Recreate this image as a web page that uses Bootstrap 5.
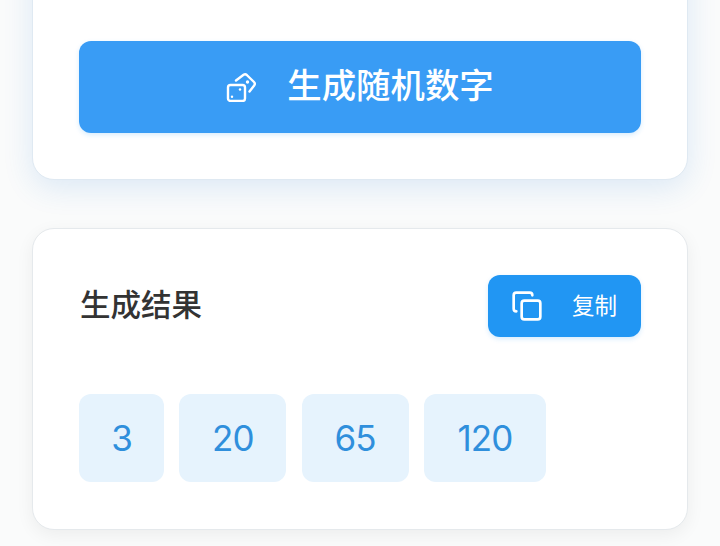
<!DOCTYPE html>
<html lang="zh">
<head>
<meta charset="utf-8">
<title>生成随机数字</title>
<link href="https://cdn.jsdelivr.net/npm/bootstrap@5.3.0/dist/css/bootstrap.min.css" rel="stylesheet">
<style>
html,body{height:546px;overflow:hidden}
body{background:#fafbfb;font-family:"Inter","Noto Sans CJK SC",sans-serif}
.page-wrap{padding:0 32px;margin-top:-60px}
.panel{background:#fff;border:1px solid #e5e9ec;border-radius:22px;padding:46px}
.panel-top{height:240px;padding-top:100px;border-color:#dfe9f2;box-shadow:0 8px 30px rgba(33,120,210,.14)}
.panel-bottom{margin-top:48px;height:302px;box-shadow:0 5px 18px rgba(0,0,0,.06);padding-top:46px}
.gen-btn{height:92px;width:100%;background:#399cf5;border:0;border-radius:12px;color:#fff;font-size:34.4px;font-weight:500;box-shadow:0 2px 5px rgba(33,150,243,.18);gap:31px}
.gen-btn:hover,.gen-btn:active{background:#399cf5!important;color:#fff!important}
.gen-btn svg{width:30px;height:30px}
.gen-btn span{padding-bottom:3px}
.res-title{font-size:30.5px;font-weight:500;color:#333;margin:0;padding:0 0 2px 1px}
.copy-btn{width:153px;height:62px;background:#2196f3;border:0;border-radius:12px;color:#fff;font-size:22.5px;gap:29px;padding-right:13px;box-shadow:0 2px 5px rgba(33,150,243,.18)}
.copy-btn svg{width:32px;height:32px}
.chips{margin-top:57px;gap:15.3px}
.num-chip{height:88px;background:#e6f3fd;border-radius:12px;color:#2f8fdc;font-size:35px;font-weight:400;letter-spacing:-1px}
.chip-s{width:85px}
.chip-m{width:107px}
.chip-l{width:122px}
</style>
</head>
<body>
<div class="page-wrap">
  <section class="panel panel-top">
    <button type="button" class="btn gen-btn d-flex align-items-center justify-content-center">
      <svg viewBox="0 0 30 30" fill="none" stroke="#fff" stroke-width="2.4" stroke-linecap="round" stroke-linejoin="round">
        <rect x="2" y="13" width="17" height="16" rx="2.5"/>
        <path d="M10 8.5 17.6 2.8a2.6 2.6 0 0 1 3.2.2l7.2 7a2.6 2.6 0 0 1 .2 3.4L23.5 19.5"/>
        <circle cx="6" cy="24.7" r="1.2" fill="#fff" stroke="none"/><circle cx="14" cy="17.5" r="1.2" fill="#fff" stroke="none"/>
        <circle cx="21.5" cy="10" r="1.7" fill="#fff" stroke="none"/>
      </svg>
      <span>生成随机数字</span>
    </button>
  </section>
  <section class="panel panel-bottom">
    <div class="d-flex justify-content-between align-items-center">
      <h2 class="res-title">生成结果</h2>
      <button type="button" class="btn copy-btn d-flex align-items-center justify-content-center">
        <svg viewBox="0 0 24 24" fill="none" stroke="#fff" stroke-width="2" stroke-linecap="round" stroke-linejoin="round">
          <rect x="8" y="8" width="14" height="14" rx="2"/>
          <path d="M4 16c-1.1 0-2-.9-2-2V4c0-1.1.9-2 2-2h10c1.1 0 2 .9 2 2"/>
        </svg>
        <span>复制</span>
      </button>
    </div>
    <div class="d-flex chips">
      <div class="num-chip chip-s d-flex align-items-center justify-content-center">3</div>
      <div class="num-chip chip-m d-flex align-items-center justify-content-center">20</div>
      <div class="num-chip chip-m d-flex align-items-center justify-content-center">65</div>
      <div class="num-chip chip-l d-flex align-items-center justify-content-center">120</div>
    </div>
  </section>
</div>
<script src="https://cdn.jsdelivr.net/npm/bootstrap@5.3.0/dist/js/bootstrap.bundle.min.js"></script>
</body>
</html>
